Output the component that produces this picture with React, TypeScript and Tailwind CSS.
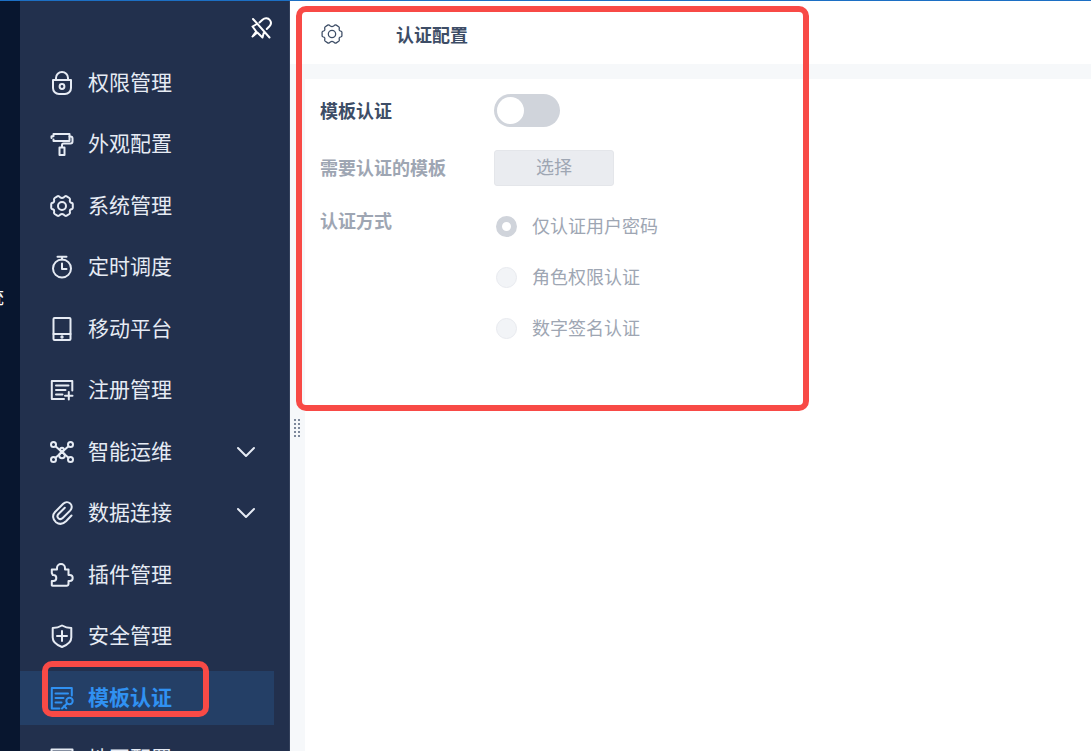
import React, { useState } from "react";

const Icon = ({
  children,
  className = "size-6",
}: {
  children: React.ReactNode;
  className?: string;
}) => (
  <svg
    viewBox="0 0 24 24"
    fill="none"
    stroke="currentColor"
    strokeWidth="2"
    strokeLinecap="round"
    strokeLinejoin="round"
    aria-hidden="true"
    className={`shrink-0 ${className}`}
  >
    {children}
  </svg>
);

const gear = (
  <>
    <path d="M22 9q.8.400.8 1.200v3.600q0 .8-.8 1.200l-1.300.5q-1 .5-.9 1.600l.2 1.500q0 .9-.7 1.400l-2.600 1.700q-.8.500-1.600 0l-1.300-1q-1.800-1.200-3.600 0l-1.300 1q-.8.500-1.600 0l-2.600-1.700q-.7-.500-.7-1.400l.2-1.500q.1-1.100-.9-1.600L2 15q-.8-.400-.8-1.200v-3.600Q1.200 9.400 2 9l1.300-.5q1-.5.9-1.600L4 5.400q0-.9.7-1.400l2.600-1.700q.8-.5 1.600 0l1.300 1q1.800 1.200 3.600 0l1.300-1q.8-.5 1.600 0L19.300 4q.7.500.7 1.400l-.2 1.500q-.1 1.100.9 1.600Z" />
    <circle cx="12" cy="12" r="4" />
  </>
);

const icons = {
  lock: (
    <>
      <path d="M3 9h18v8a6 6 0 0 1-6 6H9a6 6 0 0 1-6-6Z" />
      <path d="M6 9V7a6 6 0 0 1 12 0v2" />
      <circle cx="12" cy="15.5" r="2.4" />
    </>
  ),
  roller: (
    <>
      <path d="M1.500 6V4.200h2V2h16v7h-16V7.500" />
      <path d="M19.500 4.500h1a2 2 0 0 1 2 2v3a2 2 0 0 1-2 2h-7a1.500 1.500 0 0 0-1.500 1.500V15" />
      <path d="M9.500 15.500h5V23h-5Z" />
    </>
  ),
  gear,
  timer: (
    <>
      <circle cx="12" cy="13.5" r="9" />
      <path d="M7.500 1.800h9M12 2v2.500M12 8.500V14h4.500" />
    </>
  ),
  mobile: (
    <>
      <rect x="3.500" y="1" width="17" height="22" rx="1" />
      <path d="M3.500 17h17" />
      <circle cx="12" cy="20" r="0.7" fill="currentColor" />
    </>
  ),
  form: (
    <>
      <path d="M14 21H1.800V3h20.500v9.500" />
      <path d="M6 7.500h12.500M6 12h9.500M6 16.500h6.500M18.800 14v7.500M15 17.800h7.500" />
    </>
  ),
  nodes: (
    <>
      <circle cx="3.500" cy="4.500" r="2.500" />
      <circle cx="20.500" cy="4.500" r="2.500" />
      <circle cx="3.500" cy="19.500" r="2.500" />
      <circle cx="20.500" cy="19.500" r="2.500" />
      <circle cx="12" cy="9.500" r="1.800" />
      <circle cx="12" cy="15.500" r="2.800" />
      <path d="m5.500 6.300 4.500 4M18.500 6.300l-4.500 4M5.500 17.700l8-7M18.500 17.700l-8-7" />
    </>
  ),
  clip: (
    <path d="M21.500 14.500 16 20.200c-3 2.900-7 3.200-10 1C2.500 18.500 2.200 14 5 11l8.200-8.200c2.100-2.100 5-2.200 7-.4 2.100 2 2 5-.1 7.200L12.700 17c-1.300 1.300-3.100 1.300-4.300.2-1.200-1.200-1.200-2.900.1-4.200l6.300-6.300" />
  ),
  puzzle: (
    <path d="M1.800 6.500H7V5a4 4 0 0 1 8 0v1.500h3.500V12h1.200a3 3 0 0 1 0 6h-1.200v3a1.800 1.800 0 0 1-1.800 1.800H2.500c-.6 0-.9-.5-.7-1V18h1.500a3 3 0 0 0 0-6h-.5l-1-2Z" />
  ),
  shield: (
    <>
      <path d="M12 1.500c3 1.800 5.500 2.500 9.300 2.500v9.500c0 4.500-4 7.500-9.300 9.500-5.300-2-9.300-5-9.300-9.500V4C6.500 4 9 3.300 12 1.500Z" />
      <path d="M12 7v10M7 12h10" />
    </>
  ),
  certificate: (
    <>
      <path d="M9.500 22.500H1.800V2h20v7.500" />
      <path d="M5.500 7.500h12.500M5.500 12h8M5.500 16.500h6" />
      <circle cx="19.500" cy="15" r="3.200" />
      <path d="m17 17.500-5 5M14 20l2.300 2.300" />
    </>
  ),
  map: <path d="M1.500 2.500h21v19h-21ZM8.500 8v13.500M15.500 8v13.500" />,
};

type Item = { label: string; icon: keyof typeof icons; expandable?: boolean };

const items: Item[] = [
  { label: "权限管理", icon: "lock" },
  { label: "外观配置", icon: "roller" },
  { label: "系统管理", icon: "gear" },
  { label: "定时调度", icon: "timer" },
  { label: "移动平台", icon: "mobile" },
  { label: "注册管理", icon: "form" },
  { label: "智能运维", icon: "nodes", expandable: true },
  { label: "数据连接", icon: "clip", expandable: true },
  { label: "插件管理", icon: "puzzle" },
  { label: "安全管理", icon: "shield" },
  { label: "模板认证", icon: "certificate" },
  { label: "地图配置", icon: "map" },
];

const methods = ["仅认证用户密码", "角色权限认证", "数字签名认证"];

const Sidebar = () => {
  const [active, setActive] = useState("模板认证");

  return (
    <aside className="flex w-[270px] shrink-0 flex-col overflow-hidden border-r border-[#34415c] bg-[#22304d] text-[#e6ebf4]">
      <div className="flex h-[55px] shrink-0 justify-end pt-[15px] pr-4">
        <button aria-label="取消固定" className="size-6 text-white">
          <Icon>
            <path d="M4 3 20.500 21.500M10.500 6.500l3-2.800c2.500-2.200 5.700-1.700 7.300.3 1.700 2.200 1.400 4.500-.3 6.300l-2.700 2.700M7 8.500l-3.500 2 3.700 5L3.500 20.500l4.800-4 5.200 5 1.200-4.500" />
          </Icon>
        </button>
      </div>
      <nav>
        <ul>
          {items.map(({ label, icon, expandable }) => (
            <li key={label} className="pr-[15px] odd:mb-[7px] even:mb-2">
              <button
                onClick={() => setActive(label)}
                aria-current={active === label ? "page" : undefined}
                className={`flex h-[54px] w-full items-center gap-3.5 pr-4 pl-[30px] text-[21px] leading-8 ${
                  active === label ? "bg-[#243f66] font-bold text-[#3091f2]" : ""
                }`}
              >
                <Icon>{icons[icon]}</Icon>
                <span className="flex-1 pb-1 text-left">{label}</span>
                {expandable && (
                  <Icon>
                    <path d="m4 8 8 8 8-8" />
                  </Icon>
                )}
              </button>
            </li>
          ))}
        </ul>
      </nav>
    </aside>
  );
};

const App = () => {
  const [enabled, setEnabled] = useState(false);
  const [method, setMethod] = useState(methods[0]);

  return (
    <div className="flex h-screen overflow-hidden border-t border-[#1c6fc4] bg-white font-['Noto_Sans_CJK_SC',sans-serif] text-lg leading-6 text-[#3d4d66]">
      <div className="flex w-5 shrink-0 justify-end overflow-hidden bg-[#08162f] pt-[283px] pr-4 text-white">
        <span>统</span>
      </div>

      <Sidebar />

      <div className="relative flex min-w-0 flex-1 flex-col">
        <header className="flex h-[63px] shrink-0 items-center gap-[53px] pt-0.5 pl-[31px]">
          <button aria-label="设置">
            <Icon className="size-[22px] stroke-[1.4]">{gear}</Icon>
          </button>
          <h1 className="font-bold">认证配置</h1>
        </header>

        <div className="flex flex-1 border-t-[15px] border-[#f6f8fa]">
          <div className="flex w-[15px] shrink-0 justify-center bg-[#f6f8fa] pt-[340px]">
            {/* drag handle */}
            <svg viewBox="0 0 7 18" className="h-[18px] w-[7px]" fill="#7d889b">
              {[0, 4, 8, 12, 16].map((y) => (
                <path key={y} d={`M0 ${y}h2v2h-2zM4 ${y}h2v2h-2z`} />
              ))}
            </svg>
          </div>

          <main className="flex-1 pt-[15px] pl-[15px]">
            <div className="flex h-[33px] items-center">
              <label htmlFor="template-auth" className="w-[174px] pb-0.5 font-bold">
                模板认证
              </label>
              <button
                id="template-auth"
                role="switch"
                aria-checked={enabled}
                onClick={() => setEnabled(!enabled)}
                className={`flex h-[33px] w-[66px] items-center rounded-full p-[3px] ${
                  enabled ? "justify-end bg-[#3091f2]" : "bg-[#d0d4db]"
                }`}
              >
                <span className="size-[27px] rounded-full bg-white" />
              </button>
            </div>

            <div className="mt-[23px] flex h-9 items-center text-[#9ea6b3]">
              <span className="w-[174px] pb-0.5 font-bold">需要认证的模板</span>
              <button
                disabled={!enabled}
                className="h-9 w-[120px] rounded-[3px] border border-[#e4e6ea] bg-[#eaecf0] pb-1"
              >
                选择
              </button>
            </div>

            <fieldset
              disabled={!enabled}
              className="mt-[22px] flex text-[#9ea6b3]"
            >
              <legend className="float-left w-[174px] font-bold">
                认证方式
              </legend>
              <div className="flex flex-col gap-[25px] pt-[5px] pl-0.5">
                {methods.map((m) => (
                  <label key={m} className="flex items-center gap-[15px]">
                    <input
                      type="radio"
                      name="method"
                      checked={method === m}
                      onChange={() => setMethod(m)}
                      className="size-[21px] appearance-none rounded-full border border-[#e8eaef] bg-[#f2f4f7] checked:border-[6px] checked:border-[#d0d4db] checked:bg-white"
                    />
                    <span className="pb-0.5">{m}</span>
                  </label>
                ))}
              </div>
            </fieldset>
          </main>
        </div>

        {/* highlight around the settings form */}
        <div className="pointer-events-none absolute top-[5px] left-1.5 h-[405px] w-[513px] rounded-[10px] border-[6px] border-[#f84a46]" />
      </div>

      {/* highlight around the current menu entry */}
      <div className="pointer-events-none absolute top-[661px] left-[42px] h-14 w-[167px] rounded-[10px] border-[6px] border-[#f84a46]" />
    </div>
  );
};

export default App;
